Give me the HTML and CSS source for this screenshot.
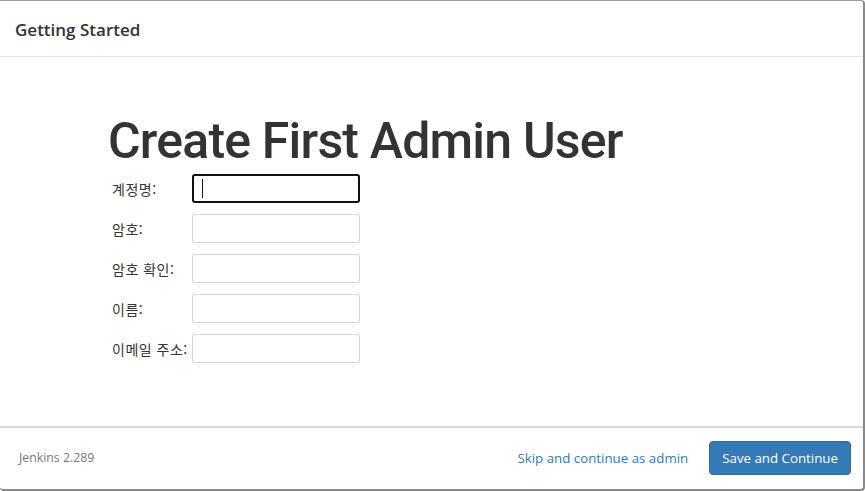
FILE: index.html
```html
<!DOCTYPE html>
<html lang="ko">
<head>
<meta charset="utf-8">
<title>Getting Started</title>
<link rel="stylesheet" href="styles.css">
</head>
<body>
<div class="modal">
  <div class="modal-header">Getting Started</div>
  <div class="modal-body">
    <h1 class="title">Create First Admin User</h1>
    <form class="form">
      <div class="row"><label class="label">계정명:</label><span class="field focused"><input class="input" type="text"></span></div>
      <div class="row"><label class="label">암호:</label><span class="field"><input class="input" type="password"></span></div>
      <div class="row"><label class="label">암호 확인:</label><span class="field"><input class="input" type="password"></span></div>
      <div class="row"><label class="label">이름:</label><span class="field"><input class="input" type="text"></span></div>
      <div class="row"><label class="label">이메일 주소:</label><span class="field"><input class="input" type="text"></span></div>
    </form>
  </div>
  <div class="modal-footer">
    <span class="version">Jenkins 2.289</span>
    <div class="actions">
      <a class="skip" href="#">Skip and continue as admin</a>
      <button class="btn" type="button">Save and Continue</button>
    </div>
  </div>
</div>
</body>
</html>
```
FILE: styles.css
```css
html, body {
  margin: 0;
  padding: 0;
  background: #ffffff;
}
body {
  width: 865px;
  height: 491px;
  font-family: "Open Sans", "Noto Sans", "Noto Sans CJK KR", sans-serif;
  color: #333333;
}
.modal {
  box-sizing: border-box;
  width: 865px;
  height: 491px;
  display: flex;
  flex-direction: column;
  background: #ffffff;
  border-top: 1px solid #9c9c9c;
  border-right: 2px solid #8a8a8a;
  border-bottom: 2px solid #8a8a8a;
  border-radius: 0 4px 4px 4px;
}
.modal-header {
  box-sizing: border-box;
  height: 56px;
  flex: none;
  display: flex;
  align-items: center;
  padding: 2px 0 0 15px;
  border-bottom: 1px solid #e5e5e5;
  font-size: 17px;
  font-weight: 600;
  color: #333333;
}
.modal-body {
  flex: 1;
  padding: 55px 0 0 108px;
}
.title {
  margin: 0;
  font-family: "Roboto", "Open Sans", sans-serif;
  font-size: 50px;
  font-weight: 500;
  letter-spacing: -0.8px;
  line-height: 58px;
  color: #333333;
}
.form {
  margin-top: 4px;
  display: flex;
  flex-direction: column;
  gap: 11px;
}
.row {
  display: flex;
  align-items: center;
  height: 29px;
}
.label {
  width: 84px;
  padding-left: 4px;
  box-sizing: border-box;
  font-family: "Noto Sans CJK KR", sans-serif;
  font-size: 14px;
  letter-spacing: 0.5px;
  color: #333333;
  white-space: nowrap;
}
.field {
  position: relative;
  display: block;
}
.input {
  box-sizing: border-box;
  display: block;
  width: 168px;
  height: 29px;
  margin: 0;
  border: 1px solid #d4d4d4;
  border-radius: 2px;
  background: #ffffff;
  outline: none;
  padding: 0 6px;
}
.focused .input {
  border: 2px solid #111111;
  border-radius: 3px;
}
.focused::after {
  content: "";
  position: absolute;
  left: 10px;
  top: 5px;
  width: 1px;
  height: 19px;
  background: #111111;
}
.modal-footer {
  box-sizing: border-box;
  flex: none;
  height: 63px;
  display: flex;
  align-items: center;
  justify-content: space-between;
  padding: 0 12px 2px 19px;
  border-top: 2px solid #d9d9d9;
}
.version {
  font-size: 12.3px;
  color: #777777;
}
.actions {
  display: flex;
  align-items: center;
  gap: 21px;
}
.skip {
  font-size: 13.3px;
  color: #337ab7;
  text-decoration: none;
}
.btn {
  height: 34px;
  padding: 0 12px;
  border: 1px solid #2e6da4;
  border-radius: 4px;
  background: #337ab7;
  color: #ffffff;
  font-family: "Open Sans", "Noto Sans", sans-serif;
  font-size: 13.3px;
}
```
